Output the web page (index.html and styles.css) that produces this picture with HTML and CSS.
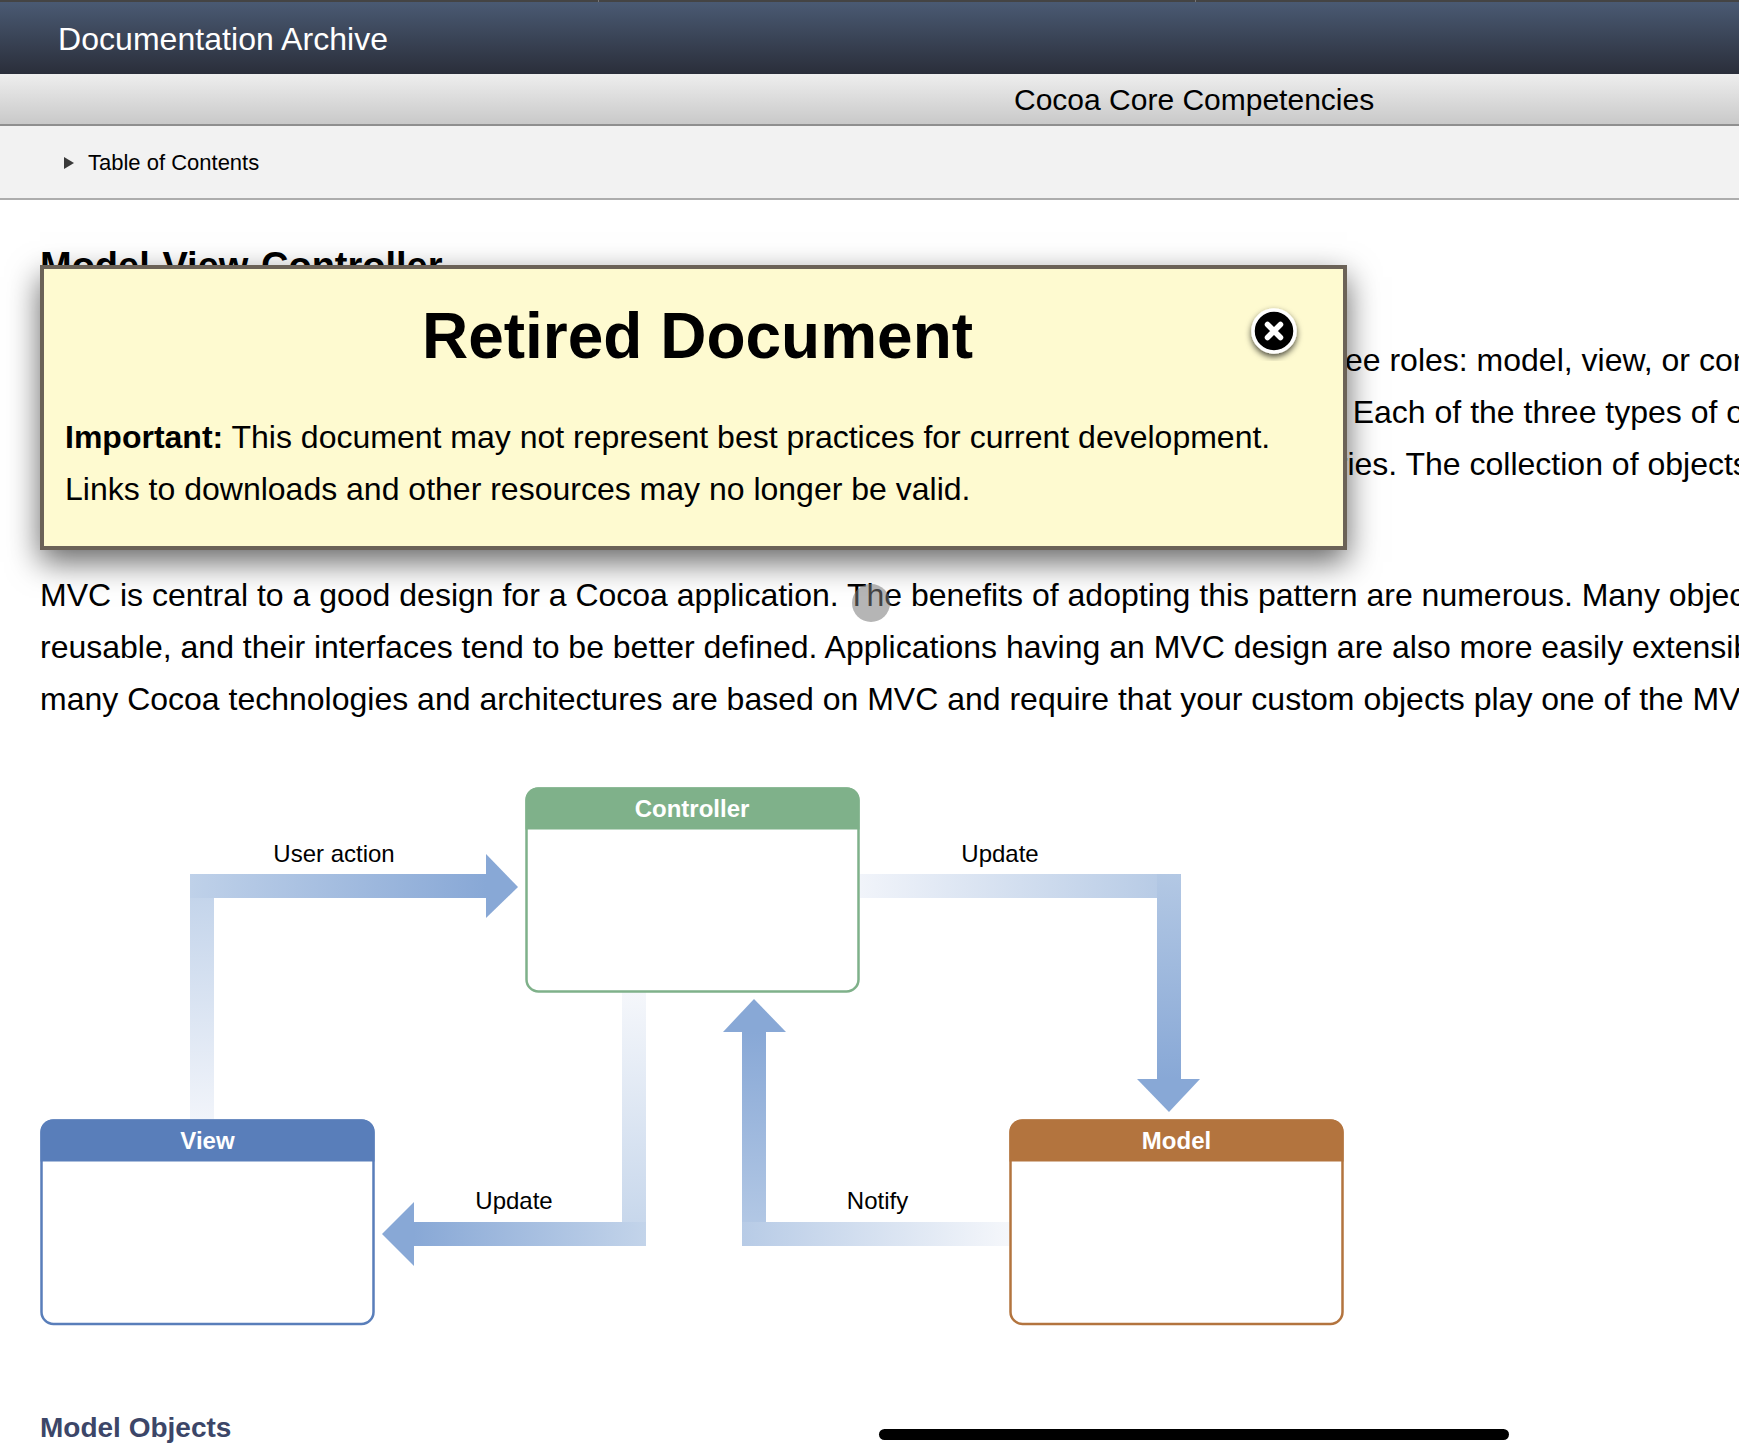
FILE: index.html
```html
<!DOCTYPE html>
<html lang="en">
<head>
  <meta charset="UTF-8" />
  <title>Model-View-Controller</title>
  <link rel="stylesheet" href="styles.css">
</head>
<body>

  <div class="top-strip"><span></span><span></span><span></span></div>
  <header class="site-bar">Documentation Archive</header>
  <div class="title-bar">Cocoa Core Competencies</div>
  <div class="toc-bar"><i class="toc-arrow"></i>Table of Contents</div>

  <main class="content">
    <h1>Model-View-Controller</h1>
    <p class="intro">The Model-View-Controller (MVC) design pattern assigns objects in an application one of three roles: model, view, or controller. The pattern defines not only the<br>
    roles objects play in the application, it defines the way objects communicate with each other. Each of the three types of objects is separated from the others by<br>
    abstract boundaries and communicates with objects of the other types across those boundaries. The collection of objects of a certain MVC type</p>
    <p class="benefits">MVC is central to a good design for a Cocoa application. The benefits of adopting this pattern are numerous. Many objects in these applications<br>
    reusable, and their interfaces tend to be better defined. Applications having an MVC design are also more easily extensible than other applications.<br>
    many Cocoa technologies and architectures are based on MVC and require that your custom objects play one of the MVC roles.</p>

    <svg class="diagram" viewBox="40 770 1320 570" width="1320" height="570">
      <defs>
        <linearGradient id="g-up-a" x1="0" y1="1" x2="0" y2="0"><stop offset="0" stop-color="#f1f4fa"/><stop offset="1" stop-color="#bfd1e9"/></linearGradient>
        <linearGradient id="g-right-a" x1="0" y1="0" x2="1" y2="0"><stop offset="0" stop-color="#bfd1e9"/><stop offset="1" stop-color="#88a8d6"/></linearGradient>
        <linearGradient id="g-right-b" x1="0" y1="0" x2="1" y2="0"><stop offset="0" stop-color="#f1f4fa"/><stop offset="1" stop-color="#b3c8e4"/></linearGradient>
        <linearGradient id="g-down-b" x1="0" y1="0" x2="0" y2="1"><stop offset="0" stop-color="#b3c8e4"/><stop offset="1" stop-color="#88a8d6"/></linearGradient>
        <linearGradient id="g-down-c" x1="0" y1="0" x2="0" y2="1"><stop offset="0" stop-color="#f5f7fb"/><stop offset="1" stop-color="#c3d4ea"/></linearGradient>
        <linearGradient id="g-left-c" x1="0" y1="0" x2="1" y2="0"><stop offset="0" stop-color="#88a8d6"/><stop offset="1" stop-color="#c3d4ea"/></linearGradient>
        <linearGradient id="g-up-d" x1="0" y1="0" x2="0" y2="1"><stop offset="0" stop-color="#88a8d6"/><stop offset="1" stop-color="#b7cbe6"/></linearGradient>
        <linearGradient id="g-right-d" x1="0" y1="0" x2="1" y2="0"><stop offset="0" stop-color="#b7cbe6"/><stop offset="1" stop-color="#f5f7fb"/></linearGradient>
      </defs>

      <!-- user action -->
      <rect x="190" y="874" width="24" height="245" fill="url(#g-up-a)"/>
      <rect x="190" y="874" width="296" height="24" fill="url(#g-right-a)"/>
      <polygon points="486,854 518,887 486,918" fill="#88a8d6"/>

      <!-- update, controller to model -->
      <rect x="860" y="874" width="321" height="24" fill="url(#g-right-b)"/>
      <rect x="1157" y="874" width="24" height="205" fill="url(#g-down-b)"/>
      <polygon points="1137,1079 1200,1079 1169,1112" fill="#88a8d6"/>

      <!-- update, controller to view -->
      <rect x="622" y="992" width="24" height="254" fill="url(#g-down-c)"/>
      <rect x="414" y="1222" width="232" height="24" fill="url(#g-left-c)"/>
      <polygon points="414,1202 382,1234 414,1266" fill="#88a8d6"/>

      <!-- notify -->
      <rect x="742" y="1032" width="24" height="214" fill="url(#g-up-d)"/>
      <rect x="742" y="1222" width="267" height="24" fill="url(#g-right-d)"/>
      <polygon points="754,999 786,1032 723,1032" fill="#88a8d6"/>

      <!-- controller box -->
      <rect x="526.5" y="788.5" width="332" height="203" rx="12" fill="#fff" stroke="#7fb18a" stroke-width="2.5"/>
      <path d="M525.5 829.5V799.5a12 12 0 0 1 12-12h310a12 12 0 0 1 12 12v30z" fill="#7fb18a"/>
      <!-- view box -->
      <rect x="41.5" y="1120.5" width="332" height="203.5" rx="12" fill="#fff" stroke="#597eba" stroke-width="2.5"/>
      <path d="M40.5 1161.5V1131.5a12 12 0 0 1 12-12h310a12 12 0 0 1 12 12v30z" fill="#597eba"/>
      <!-- model box -->
      <rect x="1010.5" y="1120.5" width="332" height="203.5" rx="12" fill="#fff" stroke="#b3743e" stroke-width="2.5"/>
      <path d="M1009.5 1161.5V1131.5a12 12 0 0 1 12-12h310a12 12 0 0 1 12 12v30z" fill="#b3743e"/>

      <text class="box-title" x="692" y="817">Controller</text>
      <text class="box-title" x="207.5" y="1149">View</text>
      <text class="box-title" x="1176.5" y="1149">Model</text>

      <text class="arrow-label" x="334" y="862">User action</text>
      <text class="arrow-label" x="1000" y="862">Update</text>
      <text class="arrow-label" x="514" y="1209">Update</text>
      <text class="arrow-label" x="877.5" y="1209">Notify</text>
    </svg>

    <h3>Model Objects</h3>
  </main>

  <!-- retired document notice, sits over the page -->
  <div class="notice">
    <h2>Retired Document</h2>
    <p><b>Important:</b> This document may not represent best practices for current development.<br>Links to downloads and other resources may no longer be valid.</p>
    <svg class="notice-close" viewBox="0 0 60 60" width="60" height="60">
      <defs>
        <filter id="close-shadow" x="-30%" y="-30%" width="160%" height="160%">
          <feDropShadow dx="0" dy="3" stdDeviation="3" flood-color="#000" flood-opacity="0.7"/>
        </filter>
      </defs>
      <circle cx="30" cy="30" r="21" fill="#000" stroke="#fff" stroke-width="3.5" filter="url(#close-shadow)"/>
      <path d="M23.5 23.5L36.5 36.5M36.5 23.5L23.5 36.5" stroke="#fff" stroke-width="5.5" stroke-linecap="round"/>
    </svg>
  </div>

  <div class="touch-dot"></div>
  <div class="home-bar"></div>

</body>
</html>
```
FILE: styles.css
```css
html, body { margin: 0; height: 1455px; overflow: hidden; background: #fff; }
body { font-family: "Liberation Sans", Arial, sans-serif; color: #000; position: relative; }

.top-strip { display: grid; grid-template-columns: 598px 597px 1fr; height: 2px; background: #444; }
.top-strip span + span { border-left: 1px solid #777; }

.site-bar {
  height: 72px; line-height: 75px; padding-left: 58px; font-size: 32px; letter-spacing: 0.05px; color: #fff;
  background: linear-gradient(#4a5a73, #2a2e3a);
}
.title-bar {
  height: 50px; line-height: 52px; padding-left: 1014px; font-size: 30px;
  background: linear-gradient(#eeeeee, #c9c9c9); border-bottom: 2px solid #8f8f8f;
}
.toc-bar {
  height: 71px; padding: 1px 0 0 64px; font-size: 22px; display: flex; align-items: center;
  background: #f2f2f2; border-bottom: 2px solid #adadad;
}
.toc-arrow {
  width: 0; height: 0; margin-right: 14px;
  border-left: 10px solid #3a3a3a; border-top: 6px solid transparent; border-bottom: 6px solid transparent;
}

.content { padding-left: 40px; }
h1 { font-size: 38px; line-height: 44px; margin: 44px 0 0; }
.content p { font-size: 32px; line-height: 52px; white-space: nowrap; margin: 0; }
.intro { padding-top: 46px; }
.benefits { padding-top: 79px; }
.diagram { display: block; margin-top: 45px; }
.box-title { font-size: 24px; font-weight: bold; fill: #fff; text-anchor: middle; }
.arrow-label { font-size: 24px; fill: #000; text-anchor: middle; }
h3 { font-size: 28px; line-height: 32px; margin: 72px 0 0; color: #3c4668; }

.notice {
  position: absolute; left: 40px; top: 265px; width: 1307px; height: 285px; box-sizing: border-box;
  background: #fefad0; border: 4px solid #6b6257; padding: 31px 21px 0;
  box-shadow: 0 12px 30px rgba(0,0,0,0.6);
}
.notice h2 { font-size: 64px; line-height: 72px; margin: 0 0 39px; padding-left: 8px; text-align: center; }
.notice p { font-size: 32px; line-height: 52px; margin: 0; }
.notice-close { position: absolute; left: 1200px; top: 32px; }

.touch-dot {
  position: absolute; left: 852px; top: 584px; width: 38px; height: 38px; border-radius: 50%;
  background: rgba(120,120,120,0.55);
}
.home-bar {
  position: absolute; left: 879px; top: 1429px; width: 630px; height: 11px; border-radius: 6px; background: #000;
}
```
